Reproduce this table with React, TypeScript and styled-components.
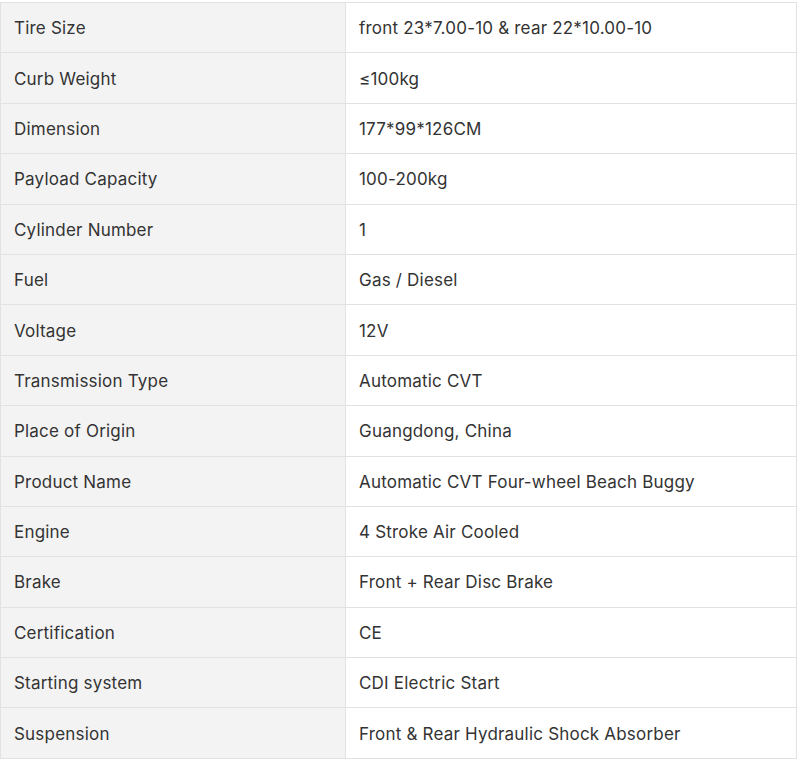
import React from "react";
import styled, { createGlobalStyle } from "styled-components";

const Global = createGlobalStyle`
  html, body { margin: 0; padding: 0; background: #fff; }
  body { font-family: Inter, "Noto Sans", sans-serif; }
`;

const Wrap = styled.div`
  padding-top: 2px;
`;

const Table = styled.table`
  width: 797px;
  border-collapse: collapse;
  table-layout: fixed;
  border: 1px solid #e2e2e2;
`;

const Row = styled.tr`
  height: 50.4px;
`;

const Cell = styled.td<{ $label?: boolean }>`
  border: 1px solid #e2e2e2;
  padding: 1px 13px 0;
  font-size: 17px;
  letter-spacing: 0.2px;
  line-height: 22px;
  color: #333;
  background: ${(p) => (p.$label ? "#f3f3f3" : "#fff")};
  width: ${(p) => (p.$label ? "345px" : "auto")};
  box-sizing: border-box;
  vertical-align: middle;
`;

const rows: [string, string][] = [
  ["Tire Size", "front 23*7.00-10 & rear 22*10.00-10"],
  ["Curb Weight", "≤100kg"],
  ["Dimension", "177*99*126CM"],
  ["Payload Capacity", "100-200kg"],
  ["Cylinder Number", "1"],
  ["Fuel", "Gas / Diesel"],
  ["Voltage", "12V"],
  ["Transmission Type", "Automatic CVT"],
  ["Place of Origin", "Guangdong, China"],
  ["Product Name", "Automatic CVT Four-wheel Beach Buggy"],
  ["Engine", "4 Stroke Air Cooled"],
  ["Brake", "Front + Rear Disc Brake"],
  ["Certification", "CE"],
  ["Starting system", "CDI Electric Start"],
  ["Suspension", "Front & Rear Hydraulic Shock Absorber"],
];

export default function App() {
  return (
    <>
      <Global />
      <Wrap>
        <Table>
          <tbody>
            {rows.map(([k, v]) => (
              <Row key={k}>
                <Cell $label>{k}</Cell>
                <Cell>{v}</Cell>
              </Row>
            ))}
          </tbody>
        </Table>
      </Wrap>
    </>
  );
}
